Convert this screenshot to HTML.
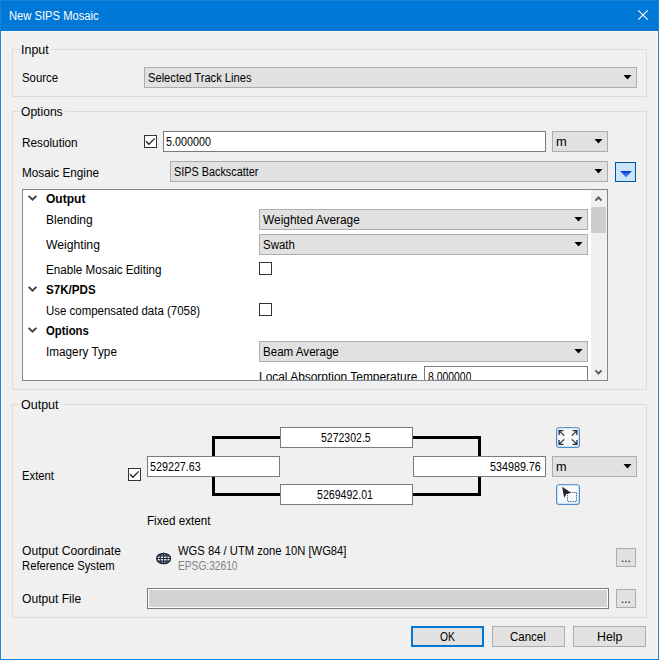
<!DOCTYPE html>
<html><head><meta charset="utf-8"><title>New SIPS Mosaic</title>
<style>
html,body{margin:0;padding:0;background:#f0f0f0;overflow:hidden}
#w{position:relative;width:659px;height:660px;overflow:hidden;font:12px/14px "Liberation Sans",sans-serif;color:#000}
#w div,#w svg,#w span{position:absolute;display:block}
#w div{box-sizing:content-box}
.t{white-space:pre;transform-origin:0 0;line-height:14px}
</style></head><body><div id="w">
<div style="left:0px;top:0px;width:659px;height:660px;background:#1883d7"></div>
<div style="left:1px;top:1px;width:657px;height:30px;background:#0078d7"></div>
<div style="left:1px;top:31px;width:657px;height:628px;background:#fdf6ef"></div>
<div style="left:2px;top:32px;width:655px;height:626px;background:#f0f0f0"></div>
<svg style="left:632px;top:6px" width="20" height="20" viewBox="0 0 20 20"><path d="M6.3 4.3L15.7 13.7M15.7 4.3L6.3 13.7" stroke="#fff" stroke-width="1.15" fill="none"/></svg>
<div style="left:12px;top:49px;width:633px;height:46px;border:1px solid #dcdcdc"></div>
<div style="left:20px;top:49px;width:31px;height:1px;background:#f0f0f0"></div>
<div style="left:12px;top:111px;width:633px;height:277px;border:1px solid #dcdcdc"></div>
<div style="left:20px;top:111px;width:45px;height:1px;background:#f0f0f0"></div>
<div style="left:12px;top:404px;width:633px;height:212px;border:1px solid #dcdcdc"></div>
<div style="left:20px;top:404px;width:41px;height:1px;background:#f0f0f0"></div>
<div style="left:144px;top:67px;width:491px;height:19px;border:1px solid #adadad;background:#e1e1e1"></div>
<svg style="left:623px;top:75px" width="9" height="5" viewBox="0 0 9 5"><path d="M0.5 0h8l-4 4.5z" fill="#000"/></svg>
<div style="left:144px;top:135px;width:11px;height:11px;border:1px solid #333;background:#fff"></div>
<svg style="left:144px;top:135px" width="13" height="13" viewBox="0 0 13 13"><path d="M2 6.2L4.9 9.3L10.7 3.4" stroke="#222" stroke-width="1.25" fill="none"/></svg>
<div style="left:163px;top:131px;width:381px;height:19px;border:1px solid #7a7a7a;background:#fff;"></div>
<div style="left:552px;top:131px;width:54px;height:19px;border:1px solid #adadad;background:#e1e1e1"></div>
<svg style="left:594px;top:139px" width="9" height="5" viewBox="0 0 9 5"><path d="M0.5 0h8l-4 4.5z" fill="#000"/></svg>
<div style="left:170px;top:161px;width:436px;height:19px;border:1px solid #adadad;background:#e1e1e1"></div>
<svg style="left:594px;top:169px" width="9" height="5" viewBox="0 0 9 5"><path d="M0.5 0h8l-4 4.5z" fill="#000"/></svg>
<div style="left:615px;top:162px;width:19px;height:18px;border:1px solid #00559b;background:#cce4f7"></div>
<svg style="left:619.7px;top:170.6px" width="12" height="7" viewBox="0 0 12 7"><defs><linearGradient id="g" x1="0" y1="0" x2="0" y2="1"><stop offset="0" stop-color="#0535d6"/><stop offset="1" stop-color="#5f9cff"/></linearGradient></defs><path d="M0.2 0.1h11.6l-5.8 6.3z" fill="url(#g)"/></svg>
<div style="left:22px;top:189px;width:584px;height:190px;border:1px solid #828790;background:#fff"></div>
<div style="left:591px;top:190px;width:16px;height:190px;background:#f0f0f0"></div>
<div style="left:591px;top:207px;width:15px;height:26px;background:#cdcdcd"></div>
<svg style="left:594px;top:195px" width="9" height="8" viewBox="0 0 9 8"><path d="M1.5 5.6l3-3.2 3 3.2" stroke="#5a5a5a" stroke-width="2" fill="none"/></svg>
<svg style="left:594px;top:368px" width="9" height="8" viewBox="0 0 9 8"><path d="M1.5 2.4l3 3.2 3-3.2" stroke="#5a5a5a" stroke-width="2" fill="none"/></svg>
<svg style="left:27px;top:194px" width="11" height="8" viewBox="0 0 11 8"><path d="M1.6 1.8l3.9 3.9 3.9-3.9" stroke="#404040" stroke-width="1.9" fill="none"/></svg>
<svg style="left:27px;top:285px" width="11" height="8" viewBox="0 0 11 8"><path d="M1.6 1.8l3.9 3.9 3.9-3.9" stroke="#404040" stroke-width="1.9" fill="none"/></svg>
<svg style="left:27px;top:326.3px" width="11" height="8" viewBox="0 0 11 8"><path d="M1.6 1.8l3.9 3.9 3.9-3.9" stroke="#404040" stroke-width="1.9" fill="none"/></svg>
<div style="left:259px;top:209px;width:327px;height:19px;border:1px solid #adadad;background:#e1e1e1"></div>
<svg style="left:574px;top:217px" width="9" height="5" viewBox="0 0 9 5"><path d="M0.5 0h8l-4 4.5z" fill="#000"/></svg>
<div style="left:259px;top:234px;width:327px;height:19px;border:1px solid #adadad;background:#e1e1e1"></div>
<svg style="left:574px;top:242px" width="9" height="5" viewBox="0 0 9 5"><path d="M0.5 0h8l-4 4.5z" fill="#000"/></svg>
<div style="left:259px;top:262px;width:11px;height:11px;border:1px solid #333;background:#fff"></div>
<div style="left:259px;top:303px;width:11px;height:11px;border:1px solid #333;background:#fff"></div>
<div style="left:259px;top:341px;width:327px;height:19px;border:1px solid #adadad;background:#e1e1e1"></div>
<svg style="left:574px;top:349px" width="9" height="5" viewBox="0 0 9 5"><path d="M0.5 0h8l-4 4.5z" fill="#000"/></svg>
<div style="left:424px;top:366px;width:162px;height:13px;border:1px solid #7a7a7a;border-bottom:none;background:#fff"></div>
<div style="left:212px;top:436px;width:269px;height:60px;box-sizing:border-box;border:3px solid #000"></div>
<div style="left:280px;top:427px;width:131px;height:19px;border:1px solid #7a7a7a;background:#fff;"></div>
<div style="left:147px;top:456px;width:131px;height:19px;border:1px solid #7a7a7a;background:#fff;"></div>
<div style="left:413px;top:456px;width:131px;height:19px;border:1px solid #7a7a7a;background:#fff;"></div>
<div style="left:280px;top:484px;width:131px;height:19px;border:1px solid #7a7a7a;background:#fff;"></div>
<div style="left:128px;top:468px;width:11px;height:11px;border:1px solid #333;background:#fff"></div>
<svg style="left:128px;top:468px" width="13" height="13" viewBox="0 0 13 13"><path d="M2 6.2L4.9 9.3L10.7 3.4" stroke="#222" stroke-width="1.25" fill="none"/></svg>
<div style="left:552px;top:456px;width:83px;height:19px;border:1px solid #adadad;background:#e1e1e1"></div>
<svg style="left:623px;top:464px" width="9" height="5" viewBox="0 0 9 5"><path d="M0.5 0h8l-4 4.5z" fill="#000"/></svg>
<div style="left:556px;top:427px;width:22px;height:19px;border:1px solid #548ac8;border-top-color:#7296c4;border-radius:3.5px;background:linear-gradient(#fbfbfb,#fafafa 60%,#f3f9fd);box-shadow:inset 0 0 0 1px #c6e6fa, inset 0 0 2px 1px #e4f3fc"></div>
<svg style="left:556px;top:427px" width="24" height="21" viewBox="0 0 24 21"><g stroke="#303030" stroke-width="1.3" fill="none">
<path d="M3.2 3.9L8.2 8.6M3.1 7.9V3.7H7.4"/><path d="M20.8 3.9L15.8 8.6M20.9 7.9V3.7H16.6"/>
<path d="M3.2 17.1L8.2 12.4M3.1 13.1V17.3H7.4"/><path d="M20.8 17.1L15.8 12.4M20.9 13.1V17.3H16.6"/></g></svg>
<div style="left:556px;top:484px;width:22px;height:19px;border:1px solid #548ac8;border-top-color:#7296c4;border-radius:3.5px;background:linear-gradient(#fbfbfb,#fafafa 60%,#f3f9fd);box-shadow:inset 0 0 0 1px #c6e6fa, inset 0 0 2px 1px #e4f3fc"></div>
<svg style="left:556px;top:484px" width="24" height="21" viewBox="0 0 24 21">
<rect x="11.5" y="8.5" width="9" height="9" fill="none" stroke="#3a58ad" stroke-width="1" stroke-dasharray="1.3 1"/>
<path d="M6.1 2.7L15.2 8.8L10.4 9.9L8.2 13.8z" fill="#262626"/></svg>
<svg style="left:155px;top:552px" width="17" height="13" viewBox="0 0 17 13"><g fill="none" stroke="#1d2640">
<ellipse cx="8.6" cy="6.5" rx="6.9" ry="5.1" stroke-width="1.45"/><ellipse cx="8.6" cy="6.5" rx="3.5" ry="5.1" stroke-width="1.1"/><path d="M8.6 1.2v10.6M1.6 6.5h14M2.6 3.9h12M2.6 9.1h12" stroke-width="1.1"/></g></svg>
<div style="left:616px;top:548px;width:18px;height:17px;border:1px solid #adadad;background:#e1e1e1"></div>
<div style="left:616px;top:589px;width:18px;height:17px;border:1px solid #adadad;background:#e1e1e1"></div>
<div style="left:147px;top:588px;width:460px;height:19px;border:1px solid #7a7a7a;background:#d3d3d3;box-shadow:inset 0 0 0 1px #fff"></div>
<div style="left:411px;top:626px;width:69px;height:17px;border:2px solid #0078d7;background:#e1e1e1"></div>
<div style="left:492px;top:626px;width:71px;height:19px;border:1px solid #adadad;background:#e1e1e1"></div>
<div style="left:573px;top:626px;width:71px;height:19px;border:1px solid #adadad;background:#e1e1e1"></div>
<span class="t" style="left:9.00px;top:9.00px;transform:scaleX(0.9333);color:#fff;">New SIPS Mosaic</span>
<span class="t" style="left:21.00px;top:43.00px;transform:scaleX(1.0369);">Input</span>
<span class="t" style="left:22.00px;top:71.00px;transform:scaleX(0.9456);">Source</span>
<span class="t" style="left:148.00px;top:71.00px;transform:scaleX(0.9294);">Selected Track Lines</span>
<span class="t" style="left:21.00px;top:105.00px;transform:scaleX(1.0070);">Options</span>
<span class="t" style="left:22.00px;top:136.00px;transform:scaleX(0.9814);">Resolution</span>
<span class="t" style="left:166.00px;top:135.00px;transform:scaleX(0.8997);">5.000000</span>
<span class="t" style="left:556.00px;top:135.00px;transform:scaleX(1.0744);">m</span>
<span class="t" style="left:22.00px;top:166.00px;transform:scaleX(0.9788);">Mosaic Engine</span>
<span class="t" style="left:174.00px;top:165.00px;transform:scaleX(0.9031);">SIPS Backscatter</span>
<span class="t" style="left:46.00px;top:192.00px;transform:scaleX(1.0037);font-weight:bold;">Output</span>
<span class="t" style="left:46.00px;top:213.00px;transform:scaleX(0.9997);">Blending</span>
<span class="t" style="left:263.00px;top:213.00px;transform:scaleX(0.9919);">Weighted Average</span>
<span class="t" style="left:46.00px;top:238.00px;transform:scaleX(1.0145);">Weighting</span>
<span class="t" style="left:263.00px;top:238.00px;transform:scaleX(0.9537);">Swath</span>
<span class="t" style="left:46.00px;top:263.00px;transform:scaleX(0.9729);">Enable Mosaic Editing</span>
<span class="t" style="left:46.00px;top:283.00px;transform:scaleX(0.9665);font-weight:bold;">S7K/PDS</span>
<span class="t" style="left:46.00px;top:304.00px;transform:scaleX(0.9544);">Use compensated data (7058)</span>
<span class="t" style="left:46.00px;top:324.00px;transform:scaleX(0.9441);font-weight:bold;">Options</span>
<span class="t" style="left:46.00px;top:345.00px;transform:scaleX(0.9786);">Imagery Type</span>
<span class="t" style="left:263.00px;top:345.00px;transform:scaleX(0.9652);">Beam Average</span>
<span class="t" style="left:259.00px;top:370.00px;transform:scaleX(0.9942);height:10.00px;overflow:hidden;">Local Absorption Temperature</span>
<span class="t" style="left:428.00px;top:370.00px;transform:scaleX(0.8684);height:10.00px;overflow:hidden;">8.000000</span>
<span class="t" style="left:21.00px;top:398.00px;transform:scaleX(1.0411);">Output</span>
<span class="t" style="left:321.00px;top:431.00px;transform:scaleX(0.8754);">5272302.5</span>
<span class="t" style="left:150.00px;top:460.00px;transform:scaleX(0.8945);">529227.63</span>
<span class="t" style="left:490.00px;top:460.00px;transform:scaleX(0.8954);">534989.76</span>
<span class="t" style="left:317.00px;top:488.00px;transform:scaleX(0.8826);">5269492.01</span>
<span class="t" style="left:556.00px;top:460.00px;transform:scaleX(1.0566);">m</span>
<span class="t" style="left:22.00px;top:468.50px;transform:scaleX(0.9401);">Extent</span>
<span class="t" style="left:147.00px;top:513.50px;transform:scaleX(0.9699);">Fixed extent</span>
<span class="t" style="left:22.00px;top:544.25px;transform:scaleX(1.0081);">Output Coordinate</span>
<span class="t" style="left:22.00px;top:559.00px;transform:scaleX(0.9392);">Reference System</span>
<span class="t" style="left:178.00px;top:544.00px;transform:scaleX(0.9357);">WGS 84 / UTM zone 10N [WG84]</span>
<span class="t" style="left:178.00px;top:559.00px;transform:scaleX(0.8493);color:#838383;">EPSG:32610</span>
<span class="t" style="left:22.00px;top:592.00px;transform:scaleX(1.0080);">Output File</span>
<span class="t" style="left:621.00px;top:551.00px;transform:scaleX(0.9562);">...</span>
<span class="t" style="left:621.00px;top:592.00px;transform:scaleX(0.9562);">...</span>
<span class="t" style="left:440.00px;top:629.75px;transform:scaleX(0.8604);">OK</span>
<span class="t" style="left:510.00px;top:629.75px;transform:scaleX(0.9587);">Cancel</span>
<span class="t" style="left:597.00px;top:629.75px;transform:scaleX(1.0287);">Help</span>
</div></body></html>
